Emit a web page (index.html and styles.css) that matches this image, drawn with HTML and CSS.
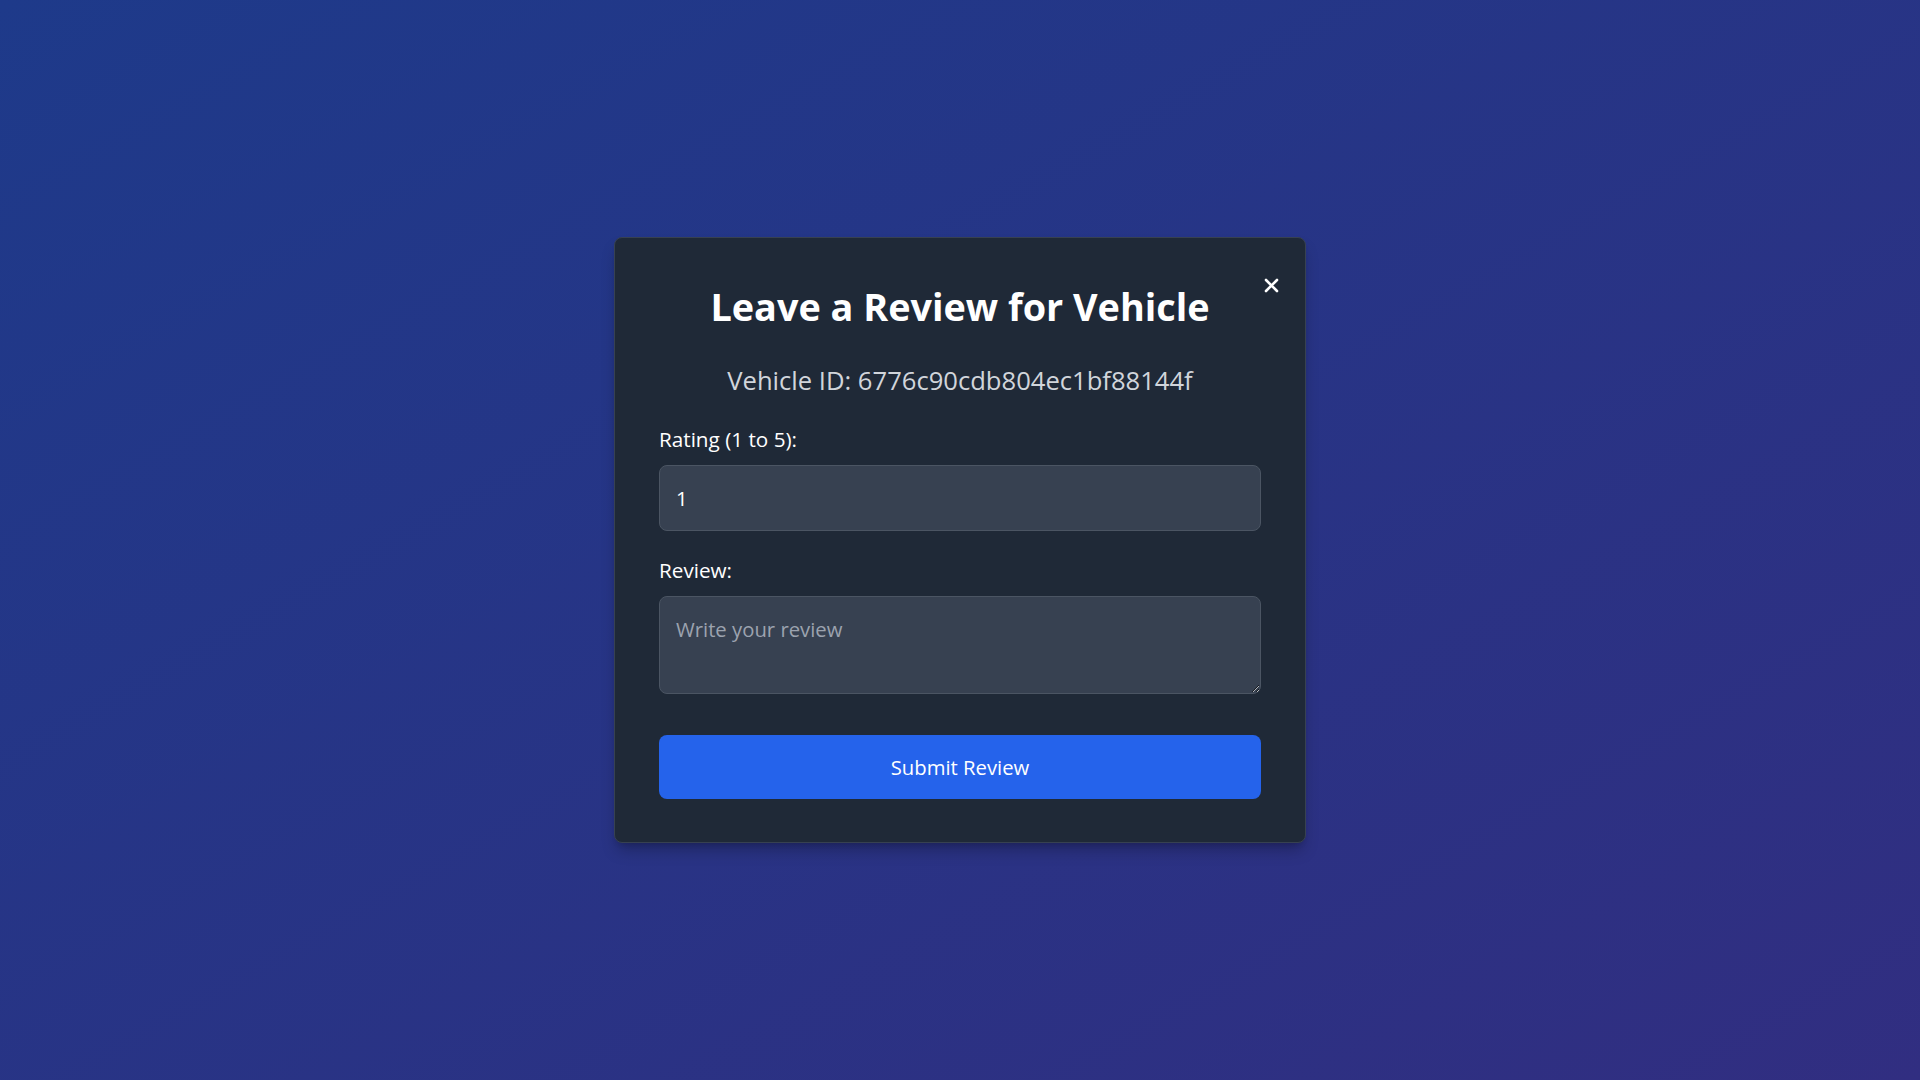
FILE: index.html
```html
<!DOCTYPE html>
<html lang="en">
<head>
<meta charset="utf-8">
<title>Leave a Review</title>
<link rel="stylesheet" href="styles.css">
</head>
<body>
<div class="modal">
  <button class="close" aria-label="Close">
    <svg width="15" height="15" viewBox="0 0 15 15"><path d="M2 2 L13 13 M13 2 L2 13" stroke="#fff" stroke-width="2.6" stroke-linecap="round"/></svg>
  </button>
  <h2 class="title">Leave a Review for Vehicle</h2>
  <p class="vid">Vehicle ID: 6776c90cdb804ec1bf88144f</p>
  <form class="form">
    <label class="label" for="rating">Rating (1 to 5):</label>
    <input class="field" id="rating" type="number" value="1" min="1" max="5">
    <label class="label label-review" for="review">Review:</label>
    <textarea class="field area" id="review" placeholder="Write your review"></textarea>
    <button class="submit" type="button">Submit Review</button>
  </form>
</div>
</body>
</html>
```
FILE: styles.css
```css
* { box-sizing: border-box; }
html, body { margin: 0; height: 100%; }
body {
  background: linear-gradient(to bottom right, #1e3a8a, #312e81);
  display: flex;
  align-items: center;
  justify-content: center;
  font-family: "Open Sans", "Noto Sans", sans-serif;
  color: #fff;
}
.modal {
  position: relative;
  width: 692px;
  background: #1f2937;
  border: 1px solid #374151;
  border-radius: 8px;
  padding: 44px 44px 43px;
  box-shadow: 0 10px 15px -3px rgba(0,0,0,.25), 0 4px 6px -4px rgba(0,0,0,.2);
  display: flex;
  flex-direction: column;
}
.close {
  position: absolute;
  top: 40px;
  right: 26px;
  width: 15px;
  height: 15px;
  padding: 0;
  border: 0;
  background: none;
  display: flex;
  cursor: pointer;
}
.title {
  margin: 3px 0 0;
  font-size: 37.8px;
  line-height: 44px;
  font-weight: 700;
  text-align: center;
}
.vid {
  margin: 34px 0 0;
  font-size: 25.6px;
  line-height: 36px;
  color: #d1d5db;
  text-align: center;
}
.form { display: flex; flex-direction: column; margin-top: 26px; }
.label { font-size: 20.7px; line-height: 28px; color: #fff; }
.label-review { margin-top: 25px; }
.field {
  margin-top: 12px;
  height: 66px;
  background: #374151;
  border: 1px solid #4b5563;
  border-radius: 8px;
  padding: 0 16px;
  font-family: inherit;
  font-size: 20.3px;
  color: #fff;
  outline: none;
}
.area {
  height: 98px;
  padding: 18px 16px 10px;
  resize: vertical;
  display: block;
}
.area::placeholder { color: #9ca3af; }
.submit {
  margin-top: 41px;
  height: 64px;
  background: #2563eb;
  border: 0;
  border-radius: 8px;
  color: #fff;
  font-family: inherit;
  font-size: 20.3px;
  cursor: pointer;
}
```
